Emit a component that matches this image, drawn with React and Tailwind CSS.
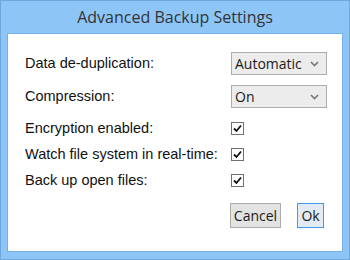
import React from 'react';

const labelFont = { fontFamily: '"Liberation Sans", Arial, sans-serif' };
const uiFont = { fontFamily: '"Open Sans", "Noto Sans", sans-serif' };

const Select = ({ value }) => (
  <div
    className="w-[96px] h-[23px] flex items-center justify-between pl-[3px] pr-[7px] border border-[#acacac] bg-[#ececec] text-[14px] text-[#1a1a1a]"
    style={uiFont}
  >
    <span className="leading-none">{value}</span>
    <svg width="9" height="6" viewBox="0 0 9 6">
      <path d="M1 1 L4.5 4.5 L8 1" fill="none" stroke="#777" strokeWidth="1.6" />
    </svg>
  </div>
);

const Check = () => (
  <div className="w-[13px] h-[13px] border border-[#707070] bg-white flex items-center justify-center">
    <svg width="9" height="9" viewBox="0 0 9 9">
      <path d="M1 4.5 L3.5 7 L8 1.5" fill="none" stroke="#111" strokeWidth="1.8" />
    </svg>
  </div>
);

const Row = ({ label, h, children }) => (
  <div className={`flex items-center ${h}`}>
    <div className="w-[206px] text-[14.5px] text-[#111] leading-none" style={labelFont}>
      {label}
    </div>
    {children}
  </div>
);

export default function App() {
  return (
    <div className="w-[350px] h-[260px] bg-[#8ec5f7] border border-[#6ea7de] flex flex-col">
      <div className="h-[32px] flex items-center justify-center text-[16px] text-[#333]" style={uiFont}>
        Advanced Backup Settings
      </div>
      <div className="mx-[6px] mb-[7px] flex-1 bg-white border border-[#77b0e6] pt-[18px] pl-[17px] flex flex-col">
        <Row label="Data de-duplication:" h="h-[23px]">
          <Select value="Automatic" />
        </Row>
        <div className="h-[10px]" />
        <Row label="Compression:" h="h-[23px]">
          <Select value="On" />
        </Row>
        <div className="h-[7px]" />
        <Row label="Encryption enabled:" h="h-[26px]">
          <Check />
        </Row>
        <Row label="Watch file system in real-time:" h="h-[26px]">
          <Check />
        </Row>
        <Row label="Back up open files:" h="h-[26px]">
          <Check />
        </Row>
        <div className="flex gap-[16px] pl-[205px] mt-[10px] text-[14px] text-[#1a1a1a]" style={uiFont}>
          <button className="w-[51px] h-[25px] border border-[#acacac] bg-[#e3e3e3] leading-none">Cancel</button>
          <button className="w-[27px] h-[25px] border border-[#3d9be9] bg-[#e2eaf3] leading-none">Ok</button>
        </div>
      </div>
    </div>
  );
}
